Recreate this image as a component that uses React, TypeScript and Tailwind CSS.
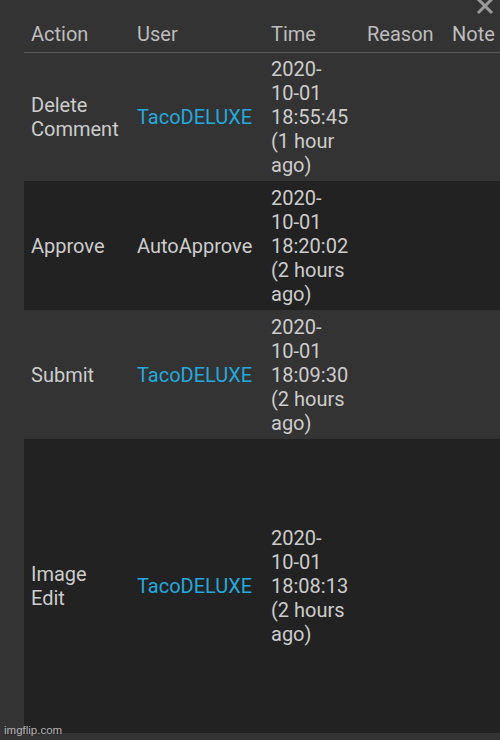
import React from 'react';

interface LogRow {
  action: string[];
  user: string;
  isLink: boolean;
  time: string[];
  height: string;
  bg: string;
}

const rows: LogRow[] = [
  {
    action: ['Delete', 'Comment'],
    user: 'TacoDELUXE',
    isLink: true,
    time: ['2020-', '10-01', '18:55:45', '(1 hour', 'ago)'],
    height: 'h-[129px]',
    bg: 'bg-[#333333]',
  },
  {
    action: ['Approve'],
    user: 'AutoApprove',
    isLink: false,
    time: ['2020-', '10-01', '18:20:02', '(2 hours', 'ago)'],
    height: 'h-[129px]',
    bg: 'bg-[#222222]',
  },
  {
    action: ['Submit'],
    user: 'TacoDELUXE',
    isLink: true,
    time: ['2020-', '10-01', '18:09:30', '(2 hours', 'ago)'],
    height: 'h-[129px]',
    bg: 'bg-[#333333]',
  },
  {
    action: ['Image', 'Edit'],
    user: 'TacoDELUXE',
    isLink: true,
    time: ['2020-', '10-01', '18:08:13', '(2 hours', 'ago)'],
    height: 'h-[294px]',
    bg: 'bg-[#222222]',
  },
];

export default function App() {
  return (
    <div className="relative w-[500px] h-[740px] overflow-hidden bg-[#333333] text-[20px] leading-[24px] text-[#cccccc] font-['Roboto',sans-serif]">
      <button className="absolute right-[5px] top-[-4px] text-[#9a9a9a] leading-none">
        <svg width="20" height="20" viewBox="0 0 20 20">
          <path d="M3 3 L17 17 M17 3 L3 17" stroke="currentColor" strokeWidth="3" />
        </svg>
      </button>

      <div className="pl-[24px]">
        <table className="w-full border-collapse table-fixed">
          <colgroup>
            <col className="w-[106px]" />
            <col className="w-[134px]" />
            <col className="w-[96px]" />
            <col className="w-[85px]" />
            <col />
          </colgroup>
          <thead>
            <tr className="h-[52px] border-b border-[#5a5a5a] text-[#bdbdbd]">
              <th className="text-left font-normal pl-[7px] pr-0 pt-[17px]">Action</th>
              <th className="text-left font-normal pl-[7px] pr-0 pt-[17px]">User</th>
              <th className="text-left font-normal pl-[7px] pr-0 pt-[17px]">Time</th>
              <th className="text-left font-normal pl-[7px] pr-0 pt-[17px]">Reason</th>
              <th className="text-left font-normal pl-[7px] pr-0 pt-[17px]">Note</th>
            </tr>
          </thead>
          <tbody>
            {rows.map((r, i) => (
              <tr key={i} className={`${r.height} ${r.bg}`}>
                <td className="pl-[7px] align-middle">
                  {r.action.map((a) => (
                    <div key={a}>{a}</div>
                  ))}
                </td>
                <td className={`pl-[7px] align-middle ${r.isLink ? 'text-[#23a9dc]' : ''}`}>{r.user}</td>
                <td className="pl-[7px] align-middle whitespace-nowrap">
                  {r.time.map((t) => (
                    <div key={t}>{t}</div>
                  ))}
                </td>
                <td className="pl-[7px]"></td>
                <td className="pl-[7px]"></td>
              </tr>
            ))}
          </tbody>
        </table>
      </div>

      <div className="absolute left-[4px] bottom-[3px] text-[11.5px] leading-[14px] text-[#b0b0b0] font-['Liberation_Sans',sans-serif]">
        imgflip.com
      </div>
    </div>
  );
}
